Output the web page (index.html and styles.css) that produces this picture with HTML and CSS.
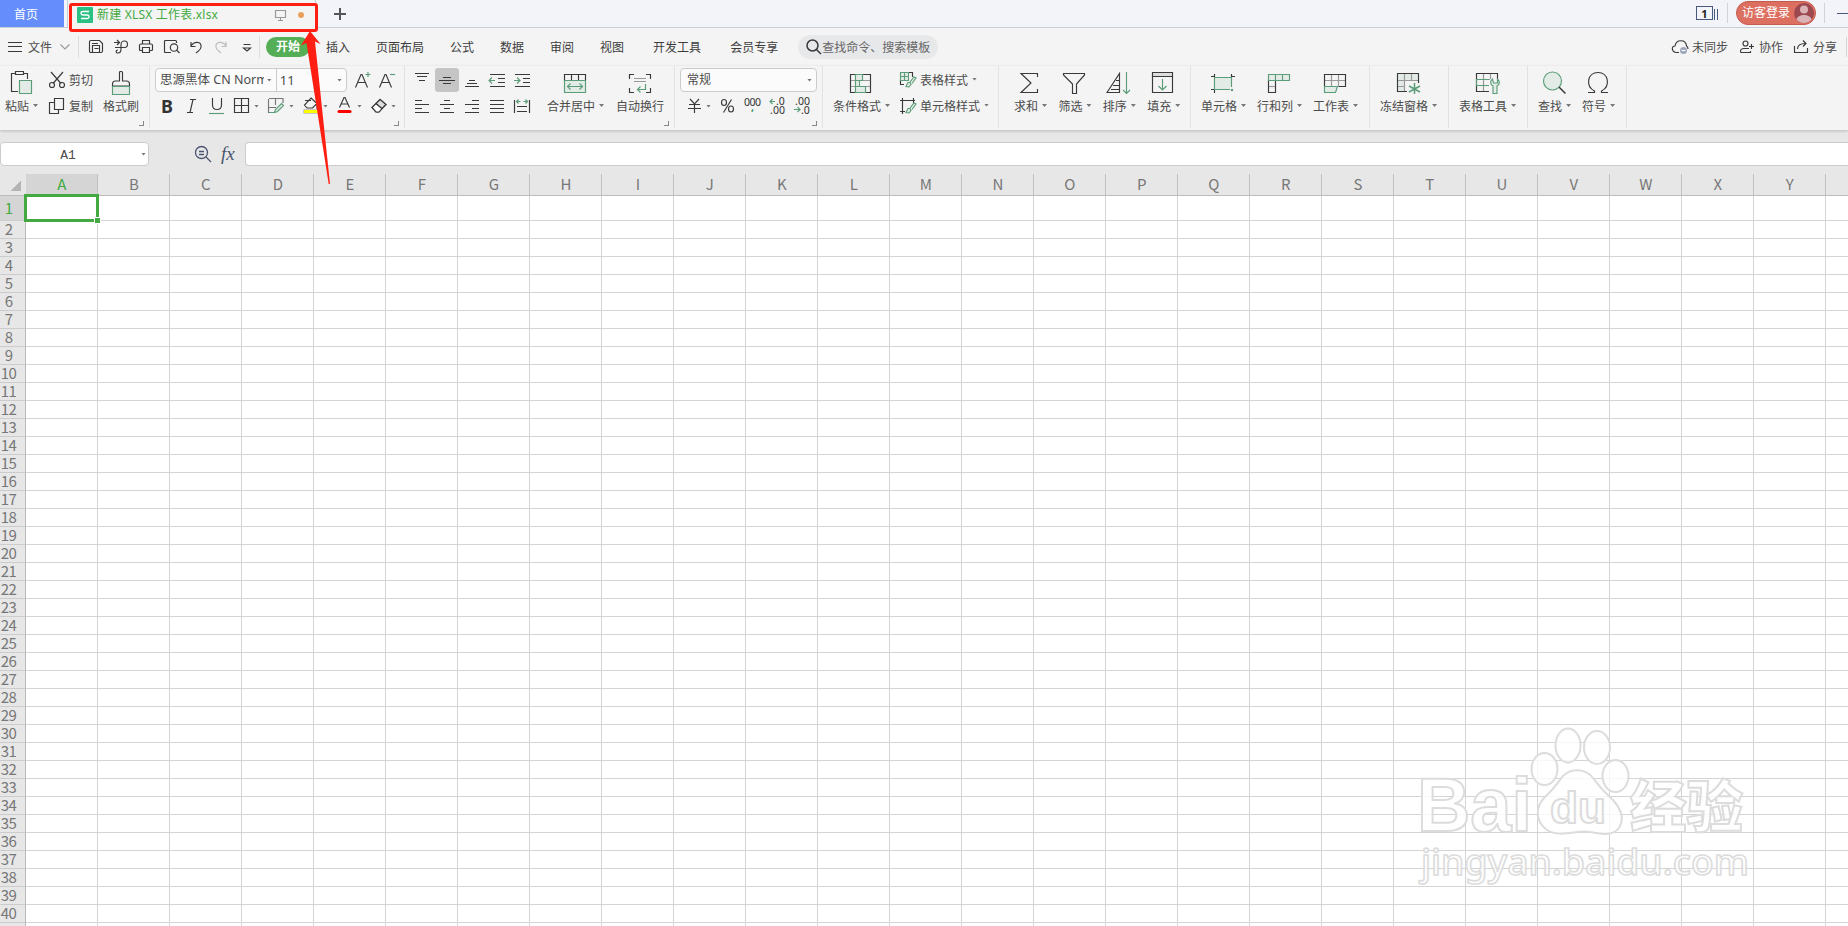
FILE: index.html
```html
<!DOCTYPE html>
<html lang="zh-CN">
<head>
    <meta charset="UTF-8">
    <meta name="viewport" content="width=device-width, initial-scale=1.0">
    <title>新建 XLSX 工作表.xlsx</title>
    <link rel="stylesheet" href="styles.css">
</head>
<body>
    <div class="titlebar">
        <div class="home-tab">首页</div>
        <div class="file-tab">
            <svg class="logo" width="16" height="16" viewBox="0 0 16 16"><rect width="16" height="16" rx="1" fill="#2bc084"/><path d="M12 4.500H6q-2 0-2 1.700t2 1.800h4q2 0 2 1.800t-2 1.700H4" fill="none" stroke="#fff" stroke-width="1.300"/></svg>
            <span class="file-name">新建 XLSX 工作表.xlsx</span>
            <svg class="ic monitor" width="12" height="12" viewBox="0 0 12 12"><path d="M.5 1.500h10v7H.5zM5.500 8.500v3M3 11.500h5"/></svg>
            <span class="dot"></span>
        </div>
        <svg class="plus" width="12" height="12" viewBox="0 0 12 12"><path d="M6 0v12M0 6h12" stroke="#555" stroke-width="2"/></svg>
        <div class="window-tools">
            <span class="count">1</span>
            <span class="count-bars"></span>
            <span class="sep"></span>
            <div class="login">访客登录
                <svg width="20" height="20" viewBox="0 0 20 20"><circle cx="10" cy="10" r="10" fill="#9b4850"/><circle cx="10" cy="6.500" r="4" fill="#d9b3b6"/><path d="M2.500 16.500c1-6 14-6 15 0A10 10 0 0 1 2.500 16.500z" fill="#d9b3b6"/></svg>
            </div>
            <span class="sep"></span>
            <span class="minimize"></span>
        </div>
    </div>

    <div class="menubar">
        <div class="file-menu">
            <svg class="ic" width="14" height="12" viewBox="0 0 14 12"><path d="M0 1.500h14M0 5.500h14M0 10.500h14"/></svg>
            <span>文件</span>
            <svg class="ic chevron" width="10" height="6" viewBox="0 0 10 6"><path d="M.5.500 5 5 9.500.5"/></svg>
        </div>
        <div class="quick">
            <svg class="ic" width="16" height="16" viewBox="0 0 16 16"><path d="M3 1.500h8.500l3 3v7.500q0 1.500-1.500 1.500H3q-1.500 0-1.500-1.500V3Q1.500 1.500 3 1.500zM4.500 13.500v-7h7v7M4 4.500h6M6.500 9.500h4"/></svg>
            <svg class="ic" width="16" height="16" viewBox="0 0 16 16"><path d="M1 3.500h5M4 1l2.500 2.500L4 6M2 8.500h9.500c4 0 4-6.500 0-6.500C8 2 8 4 8 6v4c0 3-1 4-3 4-2.500 0-2.500-3 0-3"/></svg>
            <svg class="ic" width="16" height="16" viewBox="0 0 16 16"><path d="M4.500 5V1.500h7V5M4 11.500H2.500q-1 0-1-1v-4q0-1.500 1.500-1.500h10q1.500 0 1.500 1.500v4q0 1-1 1H12M4.500 8.500h7v5h-7z"/></svg>
            <svg class="ic" width="16" height="16" viewBox="0 0 16 16"><path d="M7 13.500H1.500q-1 0-1-1v-10q0-1 1-1h10q1 0 1 1V4"/><circle cx="10" cy="8.500" r="3.700"/><path d="M12.500 11l3 3"/></svg>
            <svg class="ic" width="16" height="16" viewBox="0 0 16 16"><path d="M2 3v4.500h4.500M2 7c3-5 11-5 10 1 0 3-3 4-5 6"/></svg>
            <svg class="ic faded" width="16" height="16" viewBox="0 0 16 16"><path d="M12 3v4.500H7.500M12 7C9 2 1 2 2 8c0 3 3 4 5 6"/></svg>
            <svg class="ic" width="16" height="16" viewBox="0 0 16 16"><path d="M4.500 5.500h7M4.500 9l3.500 3 3.500-3z"/></svg>
        </div>
        <div class="menu">
            <span class="current">开始</span>
            <span>插入</span>
            <span>页面布局</span>
            <span>公式</span>
            <span>数据</span>
            <span>审阅</span>
            <span>视图</span>
            <span>开发工具</span>
            <span>会员专享</span>
        </div>
        <div class="search">
            <svg class="ic" width="16" height="16" viewBox="0 0 16 16"><circle cx="6.500" cy="6.500" r="5.500" stroke-width="1.500"/><path d="M10.500 10.500l4.500 4.500" stroke-width="1.500"/></svg>
            <span>查找命令、搜索模板</span>
        </div>
        <div class="share">
            <svg class="ic" width="17" height="14" viewBox="0 0 17 14"><path d="M7 12.500H4.500C-.5 12-1 6 3 6c1-7 11-7 11.500 0 1 .5 1.500 1 1.500 3"/><circle cx="11.500" cy="10.500" r="3.500" fill="#9da6bb" stroke="none"/><path d="M9.500 10.500h4" stroke="#fff"/></svg>
            <span>未同步</span>
            <svg class="ic person" width="14" height="14" viewBox="0 0 14 14"><circle cx="5.500" cy="3.500" r="2.500"/><path d="M9 8.500H4c-2.500 0-3.500 1.500-3.500 3 0 1 .5 1 1 1h9V11M9 6.500h5M11.500 4v5"/></svg>
            <span>协作</span>
            <svg class="ic out" width="15" height="14" viewBox="0 0 15 14"><path d="M.5 6v6.500h13V8M3.500 9c0-4 3-5.500 8-5.500M9 .500l3 3-3 3"/></svg>
            <span>分享</span>
            <i class="line"></i>
        </div>
    </div>

    <div class="ribbon">
        <div class="group clipboard">
            <div class="tool">
                <svg class="ic" width="23" height="24" viewBox="0 0 23 24"><path d="M8 21.500H1.500v-18H5M13 3.500h4.500V9M5.500 1.500h8v3h-8z"/><path class="g" d="M9.500 10.500h12v13h-12z"/></svg>
                <span class="label">粘贴<i class="caret"></i></span>
            </div>
            <div class="small">
                <div class="item"><svg class="ic" width="16" height="18" viewBox="0 0 16 18"><path d="M2 1l10 11.500M14 1L4 12.500"/><circle cx="3" cy="14" r="2.500"/><circle cx="13" cy="14" r="2.500"/></svg>剪切</div>
                <div class="item"><svg class="ic" width="16" height="18" viewBox="0 0 16 18"><path d="M5.500 1.500h9v11h-9zM5 5.500H.5v11h9V13"/></svg>复制</div>
            </div>
            <div class="tool">
                <svg class="ic" width="23" height="24" viewBox="0 0 23 24"><path d="M9.500 11V2.500q0-1 1-1h1q1 0 1 1V11h4q3 0 3 3v2H2.500v-2q0-3 3-3z"/><path class="g" d="M2.500 16.500h17v8h-17z"/></svg>
                <span class="label">格式刷</span>
            </div>
            <i class="corner"></i>
        </div>

        <div class="group fonts">
            <div class="row">
                <div class="combo">
                    <span class="font-name">思源黑体 CN Norm</span><i class="caret"></i>
                    <span class="font-size">11</span><i class="caret"></i>
                </div>
                <svg class="ic grow" width="16" height="18" viewBox="0 0 16 18"><path d="M.5 16.500L6 3.500h1l5.500 13M2.500 11.500h8"/><path class="gl" d="M10.500 3.500h5M13 1v5"/></svg>
                <svg class="ic grow" width="16" height="18" viewBox="0 0 16 18"><path d="M.5 16.500L6 3.500h1l5.500 13M2.500 11.500h8"/><path class="gl" d="M11 3.500h5"/></svg>
            </div>
            <div class="row marks">
                <b class="bold">B</b>
                <svg class="ic" width="9" height="16" viewBox="0 0 9 16"><path d="M3 1.500h6M0 14.500h6M6 1.500L3 14.500"/></svg>
                <svg class="ic under" width="16" height="16" viewBox="0 0 16 16"><path d="M3.500 0v7c0 6 9 6 9 0V0"/><path class="gl" d="M0 15.500h15"/></svg>
                <svg class="ic" width="16" height="16" viewBox="0 0 16 16"><path d="M.5.500h14v14H.5zM7.500 0v15M0 7.500h15"/></svg><i class="caret"></i>
                <svg class="ic" width="17" height="16" viewBox="0 0 17 16"><path d="M1 .5h14V5M7.500 0v7M1 9.500h7M.5 1v14" stroke="#777"/><path class="g" d="M1 14.500h6l2.500-1 6-6-2-2-6 6-1 3"/></svg><i class="caret"></i>
                <svg class="ic" width="16" height="16" viewBox="0 0 16 16"><path d="M2 2.500h6M8 0l6 5.500-4.500 4.500H4L1.500 7zM14 6v5"/><path d="M.5 13.500h15" stroke="#999" stroke-width="4"/><path d="M1 13.500h14" stroke="#ff0" stroke-width="3"/></svg><i class="caret"></i>
                <svg class="ic" width="16" height="16" viewBox="0 0 16 16"><path d="M2.500 9.500L7-.500h1l4.500 10M4 6h7"/><path d="M2 13.500h11" stroke="red" stroke-width="3" stroke-linecap="round"/></svg><i class="caret"></i>
                <svg class="ic" width="16" height="16" viewBox="0 0 16 16"><path d="M9 1.500l6 5-7 7.500H5L1 9.500z"/><path d="M5 5.500l6 5-3 3.500H5L1 9.500z" fill="#fff"/><path d="M9 1.500l6 5-4 4-6-5z" fill="#ddd"/></svg><i class="caret"></i>
            </div>
            <i class="corner"></i>
        </div>

        <div class="group align">
            <div class="align-grid">
                <svg class="ic" width="16" height="18" viewBox="0 0 16 18"><path d="M1 2.500h14M3 5.500h10M5 9.500h6"/></svg>
                <span class="pressed"><svg class="ic" width="16" height="18" viewBox="0 0 16 18"><path d="M4 6.500h8M0 9.500h16M4 12.500h8"/></svg></span>
                <svg class="ic" width="16" height="18" viewBox="0 0 16 18"><path d="M5 9.500h6M3 12.500h10M1 15.500h14"/></svg>
                <svg class="ic" width="16" height="18" viewBox="0 0 16 18"><path d="M1 3.500h15M9 7.500h7M9 11.500h7M1 15.500h15"/><path class="gl" d="M0 9.500h6M3 6.500l-3 3 3 3"/></svg>
                <svg class="ic" width="16" height="18" viewBox="0 0 16 18"><path d="M1 3.500h15M9 7.500h7M9 11.500h7M1 15.500h15"/><path class="gl" d="M0 9.500h6M3 6.500l3 3-3 3"/></svg>
                <svg class="ic" width="16" height="18" viewBox="0 0 16 18"><path d="M1 3.500h7M1 7.500h14M1 11.500h7M1 15.500h14"/></svg>
                <svg class="ic" width="16" height="18" viewBox="0 0 16 18"><path d="M5 3.500h6M1 7.500h14M5 11.500h6M1 15.500h14"/></svg>
                <svg class="ic" width="16" height="18" viewBox="0 0 16 18"><path d="M8 3.500h7M1 7.500h14M8 11.500h7M1 15.500h14"/></svg>
                <svg class="ic" width="16" height="18" viewBox="0 0 16 18"><path d="M1 3.500h14M1 7.500h14M1 11.500h14M1 15.500h14"/></svg>
                <svg class="ic" width="16" height="18" viewBox="0 0 16 18"><path d="M.5 3v13M15.500 3v13M3 9.500h10M3 14.500h10"/><path class="gl" d="M2.500 4.500h4M4.500 2.500l-2 2 2 2M9.500 4.500h4M11.500 2.500l2 2-2 2"/></svg>
            </div>
            <div class="tool">
                <svg class="ic" width="23" height="24" viewBox="0 0 23 24"><path d="M.5 4.500h21v6H.5zM7.500 5v5M14.500 5v5"/><path class="g" d="M.5 10.500h21v12H.5z"/><path class="gl" d="M3.500 16.500h15M6.500 13.500l-3 3 3 3M15.500 13.500l3 3-3 3"/></svg>
                <span class="label">合并居中<i class="caret"></i></span>
            </div>
            <div class="tool wrap">
                <svg class="ic" width="23" height="24" viewBox="0 0 23 24"><path d="M.5 9V4.500H5M17 4.500h4.500V9M.5 18v4.500H5M17 22.500h4.500V18"/><path class="l" d="M5 8.500h12M5 11.500h12"/><path class="gl" d="M16.500 14v5.500h-8M11.500 16.500l-3 3 3 3"/></svg>
                <span class="label">自动换行</span>
            </div>
            <i class="corner"></i>
        </div>

        <div class="group number">
            <div class="combo wide"><span>常规</span><i class="caret"></i></div>
            <div class="row num-row">
                <svg class="ic yen" width="13" height="16" viewBox="0 0 13 16"><path d="M2 1l4.500 5L11 1M1 6.500h11M0 10.500h13M6.500 6v9"/></svg><i class="caret"></i>
                <svg class="ic pct" width="13" height="16" viewBox="0 0 13 16"><ellipse cx="3" cy="4.500" rx="2.500" ry="3"/><ellipse cx="10" cy="11" rx="2.500" ry="3"/><path d="M10.500 1.500l-8 13"/></svg>
                <svg class="num" width="18" height="18" viewBox="0 0 18 18"><text x="0" y="9" textLength="17">000</text><text class="green" x="7" y="14">,</text></svg>
                <svg class="ic num" width="18" height="18" viewBox="0 0 18 18"><text x="7" y="8">.0</text><text x="1" y="17" textLength="15">.00</text><path class="gl" d="M1 4.500h5M3.500 2L1 4.500 3.500 7"/></svg>
                <svg class="ic num" width="18" height="18" viewBox="0 0 18 18"><text x="1" y="8" textLength="15">.00</text><text x="7" y="17">.0</text><path class="gl" d="M0 12.500h6M3.500 10L6 12.500 3.500 15"/></svg>
            </div>
            <i class="corner"></i>
        </div>

        <div class="group styles">
            <div class="tool">
                <svg class="ic" width="23" height="24" viewBox="0 0 23 24"><path d="M.5 4.500h20v18H.5z"/><path class="l" d="M1 10.500h19M1 16.500h19"/><path class="g" d="M5.500 4.500h7v6h-7zM5.500 10.500h4v6h-4zM5.500 16.500h10v6h-10z"/></svg>
                <span class="label">条件格式<i class="caret"></i></span>
            </div>
            <div class="small">
                <div class="item"><svg class="ic" width="16" height="18" viewBox="0 0 16 18"><path d="M9 1.500h3.500V6M.5 9v4.500H4"/><path class="g" d="M.5 1.500h8v8h-8zM4.500 1v9M.5 5.500h8"/><path class="g" d="M6 15.500l2-4h2l1 2-2 2.500zM10 11l4-5 2 1-4 5.500"/></svg>表格样式<i class="caret"></i></div>
                <div class="item"><svg class="ic" width="16" height="18" viewBox="0 0 16 18"><path d="M0 3.500h15M2.500 1v16M13.500 1v5M0 14.500h5"/><path class="g" d="M6 15.500l2-4h2l1 2-2 2.500zM10 11l4-5 2 1-4 5.500"/></svg>单元格样式<i class="caret"></i></div>
            </div>
        </div>

        <div class="group edit">
            <div class="tool">
                <svg class="ic" width="23" height="24" viewBox="0 0 23 24"><path d="M18.500 7V3.500H2l10 9.500L2 22.500h16.500V19"/></svg>
                <span class="label">求和<i class="caret"></i></span>
            </div>
            <div class="tool">
                <svg class="ic" width="23" height="24" viewBox="0 0 23 24"><path d="M.5 3.500h21v1.500l-8 9v9.500h-4V14L.5 5z"/></svg>
                <span class="label">筛选<i class="caret"></i></span>
            </div>
            <div class="tool">
                <svg class="ic" width="23" height="24" viewBox="0 0 23 24"><path d="M-1 22.500L11.500 3.500v19zM8 10.500h3.500M5 15.500h6.500M3 19.500h8.500"/><path class="gl" d="M18.500 2v21M15 20l3.500 3.500L22 20"/></svg>
                <span class="label">排序<i class="caret"></i></span>
            </div>
            <div class="tool">
                <svg class="ic" width="23" height="24" viewBox="0 0 23 24"><path d="M.5 2.500h20v4H.5z" fill="#ddd"/><path d="M.5 6.500h20v16H.5z"/><path class="gl" d="M10.500 9v11M6.500 16l4 4 4-4"/></svg>
                <span class="label">填充<i class="caret"></i></span>
            </div>
        </div>

        <div class="group">
            <div class="tool">
                <svg class="ic" width="23" height="24" viewBox="0 0 23 24"><path d="M-1 6.500h4M2.500 4v3M-1 19.500h4M2.500 19v4M19 6.500h4M19.500 4v3"/><path class="g" d="M2.500 7.500h17v12h-17z"/><path d="M18 17h4v5h-4z" fill="#f4f4f4" stroke="none"/><path d="M19.500 19.500h1v1h-1z" class="g"/></svg>
                <span class="label">单元格<i class="caret"></i></span>
            </div>
            <div class="tool">
                <svg class="ic" width="23" height="24" viewBox="0 0 23 24"><path d="M.5 10.500h7v12h-7z"/><path class="l" d="M1 16.500h6"/><path class="g" d="M.5 4.500h21v6H.5zM7.500 5v5M14.500 5v5"/></svg>
                <span class="label">行和列<i class="caret"></i></span>
            </div>
            <div class="tool">
                <svg class="ic" width="23" height="24" viewBox="0 0 23 24"><path class="l" d="M7.500 5v11M14.500 5v11M1 10.500h20"/><path d="M.5 16V4.500h21v12h-7"/><path class="g" d="M.5 16.500h13l-2 6H.5z"/></svg>
                <span class="label">工作表<i class="caret"></i></span>
            </div>
        </div>

        <div class="group">
            <div class="tool">
                <svg class="ic" width="23" height="24" viewBox="0 0 23 24"><path d="M1 4h20v6H7v12H1z" fill="#e3ebe6" stroke="none"/><path class="l" d="M7.500 4v18M1 10.500h20M1 16.500h6M14.500 4v6"/><path d="M10 21.500H.500v-18h21V13"/><path class="gl" d="M17.500 13v11M12 16l11 6M12 22l11-6" stroke-width="1.500"/></svg>
                <span class="label">冻结窗格<i class="caret"></i></span>
            </div>
        </div>

        <div class="group">
            <div class="tool">
                <svg class="ic" width="23" height="24" viewBox="0 0 23 24"><path class="l" d="M7.500 4v18M14.500 4v5M7 9.500h7"/><path d="M13 21.500H.500v-18h21V9"/><path class="gl" d="M13 9.500H.500v6H13"/><path class="g" d="M16.500 9c-3 2-2 6 .5 7v7.500h4V16c3-1 3-5 .5-7v4h-4z"/></svg>
                <span class="label">表格工具<i class="caret"></i></span>
            </div>
        </div>

        <div class="group">
            <div class="tool">
                <svg class="ic" width="23" height="24" viewBox="0 0 23 24"><circle class="g" cx="9.500" cy="11" r="9"/><path d="M16 17l6.500 6.500" stroke-width="1.500"/></svg>
                <span class="label">查找<i class="caret"></i></span>
            </div>
            <div class="tool">
                <svg class="ic" width="23" height="24" viewBox="0 0 23 24"><path d="M1 22.500h6.500v-1.500C-2 16 .500 2.500 11 2.500S24 16 14.500 21v1.500H21"/></svg>
                <span class="label">符号<i class="caret"></i></span>
            </div>
        </div>
    </div>

    <div class="formula-bar">
        <div class="name-box"><span>A1</span><i class="caret"></i></div>
        <svg class="lens" width="17" height="17" viewBox="0 0 17 17"><circle cx="6.500" cy="6.500" r="6"/><path d="M4 5.500h5M4 8.500h5M11 11l5 5"/></svg>
        <span class="fx">fx</span>
        <div class="formula"></div>
    </div>

    <div class="sheet">
        <div class="head" id="head">
            <div class="all"></div>
        </div>
        <div id="rows"></div>
        <div class="selection"></div>
        <div class="handle"></div>
    </div>

    <svg class="watermark" width="350" height="170" viewBox="0 0 350 170">
        <g class="mark">
            <text class="latin" x="3" y="104" textLength="115" lengthAdjust="spacingAndGlyphs">Bai</text>
            <ellipse cx="130.500" cy="42" rx="13" ry="16"/>
            <ellipse cx="154" cy="18.500" rx="12.500" ry="17"/>
            <ellipse cx="183" cy="20.500" rx="13" ry="16.500"/>
            <ellipse cx="201.500" cy="49" rx="13" ry="16"/>
            <path d="M149 49c8-8 22-8 30 2 8 11 12 15 20 22 16 18 8 34-8 34-12 0-16-4-28-2-14 2-22 3-30-2-12-9-12-23-2-33 8-7 12-13 18-21z"/>
            <text class="du" x="136" y="96" textLength="56" lengthAdjust="spacingAndGlyphs">du</text>
            <text class="cjk" x="216" y="100" textLength="113" lengthAdjust="spacingAndGlyphs">经验</text>
            <text class="url" x="7" y="148" textLength="328" lengthAdjust="spacingAndGlyphs">jingyan.baidu.com</text>
        </g>
    </svg>

    <!-- highlight around the file tab -->
    <div class="red-box"></div>
    <svg class="arrow" width="40" height="160" viewBox="0 0 40 160"><path d="M10 1l10.500 13-5.500-2.500L30 154h-1.300L6.500 13 1 15.500z" fill="#ff1f12"/></svg>

    <script>
        const head = document.getElementById('head');
        const rows = document.getElementById('rows');
        const letters = 'ABCDEFGHIJKLMNOPQRSTUVWXY'.split('');

        // one blank column at the right edge
        letters.push('');

        letters.forEach(letter => {
            const col = document.createElement('div');
            col.className = letter === 'A' ? 'col active' : 'col';
            col.textContent = letter;
            head.appendChild(col);
        });

        for (let i = 1; i <= 41; i++) {
            const row = document.createElement('div');
            row.className = i === 1 ? 'line-row first' : 'line-row';

            const num = document.createElement('div');
            num.className = i === 1 ? 'num-cell active' : 'num-cell';
            num.textContent = i > 40 ? '' : i;
            row.appendChild(num);

            letters.forEach(() => {
                const cell = document.createElement('div');
                cell.className = 'cell';
                row.appendChild(cell);
            });
            rows.appendChild(row);
        }
    </script>
</body>
</html>
```
FILE: styles.css
```css
* {
    box-sizing: border-box;
}

body {
    margin: 0;
    height: 926px;
    position: relative;
    overflow: hidden;
    background: #e7e7e7;
    font-family: "Noto Sans", "Noto Sans CJK SC", sans-serif;
    font-size: 12px;
    line-height: 16px;
    color: #4c4c4c;
    white-space: nowrap;
}

svg {
    display: block;
    flex: none;
    overflow: visible;
}

.ic {
    fill: none;
    stroke: #3a3a3a;
    stroke-width: 1.15;
}

.ic .g {
    stroke: #5b9d78;
    fill: #e3ebe6;
}

.ic .gl {
    stroke: #5b9d78;
}

.ic .l {
    stroke: #999;
}

.caret {
    flex: none;
    width: 5px;
    height: 3px;
    background: #777;
    clip-path: polygon(0 0, 100% 0, 50% 100%);
}

/* title bar */
.titlebar {
    display: flex;
    height: 28px;
    background: #f3f4f9;
    border-bottom: 1px solid #c6ceda;
}

.home-tab {
    width: 64px;
    height: 27px;
    padding: 7px 0 0 14px;
    background: #658dfb;
    color: #fff;
}

.file-tab {
    display: flex;
    align-items: center;
    width: 249px;
    height: 28px;
    margin-left: 3px;
    padding: 2px 0 0 9px;
    background: #f4f4f4;
    border-left: 1px solid #c6ceda;
    border-right: 1px solid #c6ceda;
}

.file-name {
    width: 178px;
    margin-left: 4px;
    letter-spacing: .2px;
    color: #42a93f;
}

.monitor {
    stroke: #999;
}

.dot {
    width: 6px;
    height: 6px;
    margin-left: 11px;
    border-radius: 50%;
    background: #e8a15c;
}

.plus {
    margin: 8px 0 0 18px;
}

.window-tools {
    display: flex;
    align-items: center;
    height: 26px;
    margin-left: auto;
}

.count {
    width: 17px;
    height: 14px;
    border: 1px solid #49587d;
    line-height: 13px;
    font-size: 11px;
    font-weight: bold;
    text-align: center;
    color: #222;
}

.count-bars {
    width: 4px;
    height: 11px;
    margin: 2px 9px 0 1px;
    border: 1px solid #49587d;
    border-width: 0 1px;
}

.sep {
    width: 1px;
    height: 20px;
    background: #d0d3da;
}

.login {
    display: flex;
    align-items: center;
    justify-content: space-between;
    width: 80px;
    height: 24px;
    margin: 0 8px;
    padding: 0 1px 0 5px;
    border: 1px solid #c45c4e;
    border-radius: 12px;
    background: #dd6f61;
    color: #fff;
}

.minimize {
    width: 11px;
    height: 1px;
    margin-left: 12px;
    background: #49587d;
}

/* menu */
.menubar {
    display: flex;
    align-items: center;
    height: 38px;
    background: #f4f4f4;
}

.menubar span {
    position: relative;
    top: 1px;
}

.file-menu {
    display: flex;
    align-items: center;
    width: 79px;
    height: 22px;
    padding-left: 8px;
    border-right: 1px solid #ddd;
}

.file-menu span {
    margin: 0 8px 0 6px;
}

.chevron {
    stroke: #999;
}

.quick {
    display: flex;
    align-items: center;
    gap: 9.2px;
    width: 181px;
    height: 22px;
    padding-left: 9px;
    border-right: 1px solid #ddd;
}

.faded {
    stroke: #bbb;
}

.menu {
    display: flex;
    align-items: center;
    gap: 26px;
    margin-left: 6px;
    color: #3c3c3c;
}

.menu .current {
    top: 0;
    height: 20px;
    margin-right: -10px;
    padding: 2px 10px;
    border-radius: 10px;
    background: #54ae55;
    color: #fff;
    font-weight: bold;
}

.menu span:nth-child(8) {
    margin: 0 3px;
}

.search {
    display: flex;
    align-items: center;
    width: 140px;
    height: 24px;
    margin-left: 20px;
    padding-left: 8px;
    border-radius: 12px;
    background: #e6e8ea;
    color: #666;
}

.share {
    display: flex;
    align-items: center;
    margin-left: auto;
}

.share svg {
    margin-right: 3px;
}

.share .person {
    margin: 0 5px 0 12px;
}

.share .out {
    margin: 0 4px 0 11px;
}

.share .line {
    width: 1px;
    height: 20px;
    margin: 0 1px 0 9px;
    background: #d5d5d5;
}

/* ribbon */
.ribbon {
    display: flex;
    height: 64px;
    background: #f4f4f4;
    box-shadow: 0 1px 3px rgba(0, 0, 0, .2);
}

.group {
    display: flex;
    flex: none;
    gap: 11px;
    position: relative;
    height: 62px;
    padding: 2px 11px 0 10px;
    border-right: 1px solid #e2e2e2;
}

.tool {
    display: flex;
    flex-direction: column;
    align-items: center;
    padding-top: 2px;
}

.label {
    display: flex;
    align-items: center;
    margin-top: 5px;
}

.label .caret,
.item .caret {
    margin: 0 0 3px 4px;
}

.small {
    display: flex;
    flex-direction: column;
    gap: 2px;
}

.item {
    display: flex;
    align-items: center;
    height: 24px;
    padding-top: 1px;
}

.item svg {
    margin: -1px 4px 0 0;
}

.styles .item svg {
    margin-left: -1px;
}

.corner {
    position: absolute;
    right: 5px;
    bottom: 2px;
    width: 5px;
    height: 5px;
    border: 1px solid #888;
    border-width: 0 1px 1px 0;
}

.row {
    display: flex;
    align-items: center;
    height: 24px;
}

.combo {
    display: flex;
    align-items: center;
    width: 192px;
    height: 24px;
    padding: 0 4px;
    border: 1px solid #ccc;
    border-radius: 4px;
    background: #fbfbfb;
}

.clipboard {
    width: 150px;
    padding-left: 5px;
}

.clipboard .tool + .small + .tool {
    margin-left: -1px;
}

.fonts {
    display: block;
    width: 255px;
    padding-left: 5px;
}

.font-name {
    width: 105px;
    margin-right: 3px;
    overflow: hidden;
    font-size: 12.5px;
}

.font-size {
    width: 62px;
    height: 22px;
    margin: 0 0 0 4px;
    padding-left: 3px;
    border-left: 1px solid #ccc;
    line-height: 22px;
    font-size: 13px;
}

.grow {
    margin-left: 8px;
}

.marks {
    margin-top: 2px;
    padding-left: 6px;
}

.marks svg {
    margin-left: 9px;
}

.marks .bold + svg {
    margin-left: 14px;
}

.marks .under {
    margin-left: 13px;
}

.marks .caret {
    margin-left: 4px;
}

.bold {
    width: 12px;
    font-size: 18px;
    color: #333;
}

.align {
    width: 270px;
    padding-left: 9px;
    gap: 0;
}

.align-grid {
    display: grid;
    grid-template-columns: 25px 25px 25px 25px 24px;
    grid-template-rows: 24px 24px;
    row-gap: 2px;
    align-items: center;
    margin-right: 9px;
}

.pressed {
    display: flex;
    align-items: center;
    width: 24px;
    height: 24px;
    margin-left: -4px;
    padding-left: 4px;
    border-radius: 3px;
    background: #c5c5c5;
}

.align .wrap {
    margin-left: 12px;
}

.number {
    display: block;
    width: 148px;
    padding-left: 5px;
}

.combo.wide {
    width: 137px;
    justify-content: space-between;
    padding-left: 6px;
}

.num-row {
    margin-top: 2px;
    padding-left: 8px;
}

.num-row .caret {
    margin: 0 10px 0 5px;
}

.num {
    margin-left: 7px;
    stroke-width: 1.15;
}

.pct {
    margin-right: 3px;
}

.num text {
    fill: #333;
    stroke: none;
    font: 10.5px "Noto Sans";
}

.num .green {
    fill: #3c9161;
    font-weight: bold;
}

.styles {
    width: 176px;
}

.edit {
    width: 192px;
    padding: 2px 0 0 15px;
    gap: 11.4px;
}

/* formula bar */
.formula-bar {
    display: flex;
    align-items: center;
    height: 24px;
    margin-top: 12px;
}

.name-box {
    display: flex;
    align-items: center;
    width: 149px;
    height: 24px;
    border: 1px solid #ccc;
    border-radius: 4px;
    background: #fff;
}

.name-box span {
    width: 140px;
    padding: 2px 6px 0 0;
    text-align: center;
    font: 13px "Liberation Mono", monospace;
}

.lens {
    margin-left: 46px;
    fill: none;
    stroke: #4a5670;
    stroke-width: 1.3;
}

.fx {
    width: 24px;
    margin-left: 9px;
    font: italic 19px "Liberation Serif", serif;
    color: #4a5670;
}

.formula {
    flex: 1;
    height: 24px;
    border: 1px solid #ccc;
    border-right: 0;
    border-radius: 4px 0 0 4px;
    background: #fff;
}

/* sheet */
.sheet {
    position: relative;
    margin-top: 8px;
    color: #777;
    font-family: "Noto Sans CJK SC", sans-serif;
    font-size: 15px;
    letter-spacing: -.7px;
}

.head,
.line-row {
    display: flex;
}

.all {
    flex: none;
    width: 26px;
    height: 22px;
    border-bottom: 1px solid #bbb;
    background: linear-gradient(135deg, transparent 50%, #b5b5b5 50%) 10px 6px / 11px 11px no-repeat;
}

.col {
    flex: none;
    width: 72px;
    height: 22px;
    border-right: 1px solid #c2c2c2;
    border-bottom: 1px solid #bbb;
    line-height: 20px;
    text-align: center;
}

.active {
    background: #d5d5d5;
    color: #42a943;
}

.line-row {
    height: 18px;
}

.first {
    height: 25px;
}

.num-cell {
    display: flex;
    flex: none;
    align-items: center;
    justify-content: center;
    width: 26px;
    padding: 0 8px 1px 0;
    border-right: 1px solid #b8b8b8;
    border-bottom: 1px solid #ccc;
}

.cell {
    flex: none;
    width: 72px;
    border-right: 1px solid #d4d4d4;
    border-bottom: 1px solid #d4d4d4;
    background: #fff;
}

.selection {
    position: absolute;
    left: 24px;
    top: 20px;
    width: 75px;
    height: 28px;
    border: 3px solid #42a943;
}

.handle {
    position: absolute;
    left: 94px;
    top: 43px;
    width: 7px;
    height: 7px;
    border: 1px solid #fff;
    background: #42a943;
}

/* watermark */
.watermark {
    position: absolute;
    left: 1414px;
    top: 727px;
}

.mark {
    fill: rgba(255, 255, 255, .8);
    stroke: #dcdcdc;
    stroke-width: 2;
}

.latin {
    font: bold 76px "Liberation Sans";
}

.du {
    font: bold 45px "Liberation Sans";
}

.cjk {
    font: 900 56px "Noto Sans CJK SC";
}

.url {
    font: 500 37px "Noto Sans";
    stroke-width: 1.6;
}

/* red annotation */
.red-box {
    position: absolute;
    left: 69px;
    top: 3px;
    width: 249px;
    height: 29px;
    border: 3px solid #ff1f12;
    border-radius: 3px;
}

.arrow {
    position: absolute;
    left: 300px;
    top: 30px;
}
```
